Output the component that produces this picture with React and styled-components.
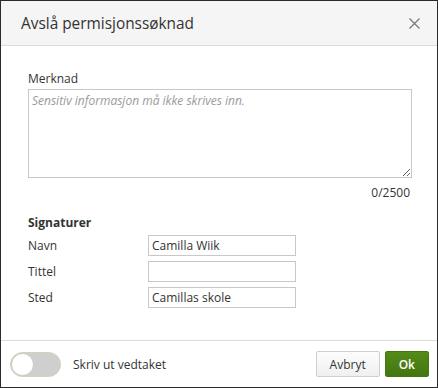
import React, { useState } from 'react';
import styled, { createGlobalStyle } from 'styled-components';

const GlobalStyle = createGlobalStyle`
  html, body {
    margin: 0;
    padding: 0;
    background: #fff;
  }
  * {
    box-sizing: border-box;
  }
  body {
    font-family: 'Open Sans', 'Noto Sans', sans-serif;
    color: #333;
  }
`;

const Dialog = styled.div`
  width: 438px;
  height: 388px;
  border: 1px solid #2b2b2b;
  display: flex;
  flex-direction: column;
  background: #fff;
`;

const Header = styled.div`
  height: 45px;
  display: flex;
  align-items: center;
  justify-content: space-between;
  padding: 0 17px 0 20px;
  background: #f5f5f5;
  border-bottom: 1px solid #dcdcdc;
`;

const Title = styled.h1`
  margin: 0;
  font-size: 15.4px;
  font-weight: 400;
  color: #333;
`;

const CloseButton = styled.button`
  border: none;
  background: none;
  padding: 0;
  width: 12px;
  height: 12px;
  display: flex;
  align-items: center;
  justify-content: center;
  cursor: pointer;
`;

const Body = styled.div`
  flex: 1;
  padding: 24px 26px 0 27px;
`;

const Label = styled.label`
  display: block;
  font-size: 12px;
  line-height: 18px;
  margin-bottom: 1px;
`;

const TextArea = styled.textarea`
  display: block;
  width: 384px;
  height: 89px;
  border: 1px solid #c8c8c8;
  border-radius: 0;
  padding: 2px 3px;
  font-family: 'Open Sans', sans-serif;
  font-size: 12px;
  color: #333;
  resize: vertical;
  outline: none;
  &::placeholder {
    color: #9a9a9a;
    font-style: italic;
  }
`;

const Counter = styled.div`
  text-align: right;
  font-size: 12px;
  margin-top: 6px;
  padding-right: 1px;
`;

const SectionTitle = styled.div`
  font-size: 12px;
  font-weight: 700;
  margin-top: 13px;
  line-height: 18px;
`;

const Grid = styled.div`
  display: grid;
  grid-template-columns: 120px 148px;
  row-gap: 5px;
  align-items: center;
  margin-top: 3px;
`;

const FieldLabel = styled.span`
  font-size: 12px;
`;

const Input = styled.input`
  width: 148px;
  height: 21px;
  border: 1px solid #c8c8c8;
  border-radius: 0;
  padding: 0 3px;
  font-family: 'Open Sans', sans-serif;
  font-size: 12px;
  color: #333;
  outline: none;
`;

const Footer = styled.div`
  height: 47px;
  border-top: 1px solid #dcdcdc;
  display: flex;
  align-items: center;
  padding: 0 8px 0 9px;
`;

const Toggle = styled.button`
  position: relative;
  width: 51px;
  height: 25px;
  border-radius: 13px;
  border: 1px solid #c9d6b8;
  background: ${p => (p.$on ? '#4b7d0f' : '#cfcfcf')};
  padding: 0;
  cursor: pointer;
  &::after {
    content: '';
    position: absolute;
    top: 1px;
    left: ${p => (p.$on ? '27px' : '1px')};
    width: 21px;
    height: 21px;
    border-radius: 50%;
    background: #fff;
  }
`;

const ToggleLabel = styled.span`
  font-size: 12px;
  margin-left: 12px;
  flex: 1;
`;

const Button = styled.button`
  height: 26px;
  padding: 0 13px;
  border-radius: 2px;
  font-family: 'Open Sans', sans-serif;
  font-size: 12px;
  cursor: pointer;
  border: 1px solid ${p => (p.$primary ? '#467610' : '#cfcfcf')};
  background: ${p =>
    p.$primary
      ? 'linear-gradient(#548b18, #447510)'
      : 'linear-gradient(#fdfdfd, #f0f0f0)'};
  color: ${p => (p.$primary ? '#fff' : '#333')};
  font-weight: ${p => (p.$primary ? 600 : 400)};
  & + & {
    margin-left: 5px;
  }
`;

export default function App() {
  const [print, setPrint] = useState(false);
  return (
    <>
      <GlobalStyle />
      <Dialog>
        <Header>
          <Title>Avslå permisjonssøknad</Title>
          <CloseButton aria-label="Lukk">
            <svg width="11" height="11" viewBox="0 0 11 11">
              <path d="M0.5 0.5 L10.5 10.5 M10.5 0.5 L0.5 10.5" stroke="#7a7a7a" strokeWidth="1.3" />
            </svg>
          </CloseButton>
        </Header>
        <Body>
          <Label>Merknad</Label>
          <TextArea placeholder="Sensitiv informasjon må ikke skrives inn." />
          <Counter>0/2500</Counter>
          <SectionTitle>Signaturer</SectionTitle>
          <Grid>
            <FieldLabel>Navn</FieldLabel>
            <Input defaultValue="Camilla Wiik" />
            <FieldLabel>Tittel</FieldLabel>
            <Input defaultValue="" />
            <FieldLabel>Sted</FieldLabel>
            <Input defaultValue="Camillas skole" />
          </Grid>
        </Body>
        <Footer>
          <Toggle $on={print} onClick={() => setPrint(!print)} />
          <ToggleLabel>Skriv ut vedtaket</ToggleLabel>
          <Button>Avbryt</Button>
          <Button $primary>Ok</Button>
        </Footer>
      </Dialog>
    </>
  );
}
